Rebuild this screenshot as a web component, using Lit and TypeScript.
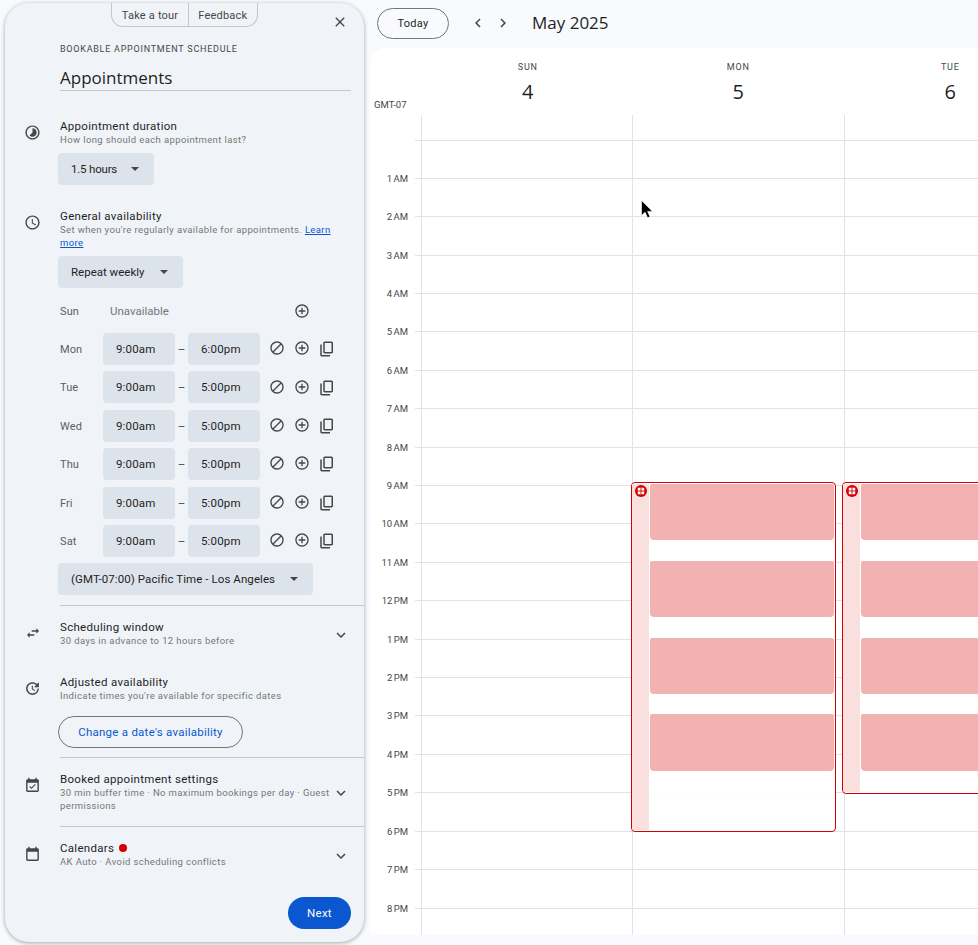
import { LitElement, html, css, svg } from "lit";
import { customElement } from "lit/decorators.js";

const P: Record<string, string> = {
  close: "M19 6.41L17.59 5 12 10.59 6.41 5 5 6.41 10.59 12 5 17.59 6.41 19 12 13.41 17.59 19 19 17.59 13.41 12z",
  lapse: "M16.24 7.76C15.07 6.59 13.54 6 12 6v6l-4.24 4.24c2.34 2.34 6.14 2.34 8.49 0 2.34-2.34 2.34-6.14-.01-8.48zM12 2C6.48 2 2 6.48 2 12s4.48 10 10 10 10-4.48 10-10S17.52 2 12 2zm0 18c-4.42 0-8-3.58-8-8s3.58-8 8-8 8 3.58 8 8-3.58 8-8 8z",
  clock: "M11.99 2C6.47 2 2 6.48 2 12s4.47 10 9.99 10C17.52 22 22 17.52 22 12S17.52 2 11.99 2zM12 20c-4.42 0-8-3.58-8-8s3.58-8 8-8 8 3.58 8 8-3.58 8-8 8zM12.5 7H11v6l5.25 3.15.75-1.23-4.5-2.67z",
  swap: "M6.99 11L3 15l3.99 4v-3H14v-2H6.99v-3zM21 9l-3.99-4v3H10v2h7.01v3L21 9z",
  update: "M21 10.12h-6.78l2.74-2.82c-2.73-2.7-7.15-2.8-9.88-.1-2.73 2.71-2.73 7.08 0 9.79s7.15 2.71 9.88 0C18.32 15.65 19 14.08 19 12.1h2c0 1.98-.88 4.55-2.64 6.29-3.51 3.48-9.21 3.48-12.72 0-3.5-3.47-3.53-9.11-.02-12.58s9.14-3.47 12.65 0L21 3v7.12zM12.5 8v4.25l3.5 2.08-.72 1.21L11 13V8h1.5z",
  booked: "M16.53 11.06L15.47 10l-4.88 4.88-2.12-2.12-1.06 1.06L10.59 17l5.94-5.94zM19 3h-1V1h-2v2H8V1H6v2H5c-1.11 0-1.99.9-1.99 2L3 19c0 1.1.89 2 2 2h14c1.1 0 2-.9 2-2V5c0-1.1-.9-2-2-2zm0 16H5V8h14v11z",
  cal: "M19 3h-1V1h-2v2H8V1H6v2H5c-1.1 0-2 .9-2 2v14c0 1.1.9 2 2 2h14c1.1 0 2-.9 2-2V5c0-1.1-.9-2-2-2zm0 16H5V8h14v11z",
  more: "M16.59 8.59L12 13.17 7.41 8.59 6 10l6 6 6-6z",
  left: "M15.41 7.41L14 6l-6 6 6 6 1.41-1.41L10.83 12z",
  right: "M10 6L8.59 7.41 13.17 12l-4.58 4.59L10 18l6-6z",
  block: "M12 2C6.48 2 2 6.48 2 12s4.48 10 10 10 10-4.48 10-10S17.52 2 12 2zM4 12c0-4.42 3.58-8 8-8 1.85 0 3.55.63 4.9 1.69L5.69 16.9C4.63 15.55 4 13.85 4 12zm8 8c-1.85 0-3.55-.63-4.9-1.69L18.31 7.1C19.37 8.45 20 10.15 20 12c0 4.42-3.58 8-8 8z",
  add: "M13 7h-2v4H7v2h4v4h2v-4h4v-2h-4V7zm-1-5C6.48 2 2 6.48 2 12s4.48 10 10 10 10-4.48 10-10S17.52 2 12 2zm0 18c-4.41 0-8-3.59-8-8s3.59-8 8-8 8 3.59 8 8-3.59 8-8 8z",
  copy: "M9 18q-.825 0-1.412-.587Q7 16.825 7 16V4q0-.825.588-1.413Q8.175 2 9 2h9q.825 0 1.413.587Q20 3.175 20 4v12q0 .825-.587 1.413Q18.825 18 18 18Zm0-2h9V4H9v12Zm-4 6q-.825 0-1.413-.587Q3 20.825 3 20V6h2v14h11v2Z",
};

const icon = (n: string, s: number) =>
  html`<svg class="ic" width=${s} height=${s} viewBox="0 0 24 24" fill="currentColor">${svg`<path d=${P[n]}></path>`}</svg>`;

const caret = html`<span class="caret"></span>`;

const DAYS: [string, string, string][] = [
  ["Mon", "9:00am", "6:00pm"],
  ["Tue", "9:00am", "5:00pm"],
  ["Wed", "9:00am", "5:00pm"],
  ["Thu", "9:00am", "5:00pm"],
  ["Fri", "9:00am", "5:00pm"],
  ["Sat", "9:00am", "5:00pm"],
];

const HOURS = ["1 AM","2 AM","3 AM","4 AM","5 AM","6 AM","7 AM","8 AM","9 AM","10 AM","11 AM","12 PM","1 PM","2 PM","3 PM","4 PM","5 PM","6 PM","7 PM","8 PM"];

@customElement("app-root")
export class AppRoot extends LitElement {
  static styles = css`
    :host { display: block; width: 978px; height: 945px; overflow: hidden; background: #f8fafd; font-family: Roboto, "Liberation Sans", sans-serif; color: #1f1f1f; }
    * { box-sizing: border-box; }
    .ic { display: block; flex: none; }
    .page { display: flex; height: 945px; }

    .panel { position: relative; flex: none; width: 359px; height: 939px; margin: 3px 0 0 5px; background: #f0f4f9; border-radius: 24px; box-shadow: 0 1px 4px rgba(60,64,67,.45); display: flex; flex-direction: column; }
    .tabs { align-self: center; display: flex; height: 24px; border: 1px solid #c4c7c5; border-top: 0; border-radius: 0 0 12px 12px; font-size: 11px; letter-spacing: .2px; color: #444746; line-height: 25px; }
    .tabs span { padding: 0 9.5px; }
    .tabs span + span { border-left: 1px solid #c4c7c5; }
    .x { position: absolute; top: 11px; left: 327px; color: #444746; }
    .head { margin: 16px 13px 0 55px; }
    .eyebrow { font-size: 9px; line-height: 12px; letter-spacing: .75px; color: #444746; font-weight: 400; }
    .name { margin-top: 11px; font-family: "Open Sans", sans-serif; font-size: 17px; line-height: 24px; height: 25px; border-bottom: 1px solid #c4c7c5; color: #1f1f1f; }

    .sec { display: flex; padding-right: 13px; }
    .lead { flex: none; width: 55px; display: flex; justify-content: center; padding-top: 5px; color: #444746; }
    .body { flex: 1; min-width: 0; }
    .t { font-size: 11.5px; line-height: 14px; letter-spacing: .3px; font-weight: 450; color: #1f1f1f; }
    .s { font-size: 9.5px; line-height: 13px; letter-spacing: .38px; color: #747775; }
    .s a { color: #0b57d0; text-decoration: underline; }
    .chev { flex: none; align-self: center; padding-top: 3px; margin: 0 1px 0 2px; color: #444746; }

    .sel { display: flex; justify-content: space-between; align-items: center; height: 32px; margin: 7px 0 0 -2px; padding: 0 15px 0 13px; background: #dde3ea; border-radius: 4px; font-size: 11.5px; color: #1f1f1f; }
    .sel.wk { width: 125px; }
    .sel.dur { width: 96px; letter-spacing: -.2px; }
    .sel.tz { width: 255px; margin-top: 2.8px; letter-spacing: .08px; }
    .caret { width: 0; height: 0; border-left: 4px solid transparent; border-right: 4px solid transparent; border-top: 4px solid #444746; }

    .rows { margin-top: 3.4px; }
    .row { display: flex; align-items: center; height: 38.4px; font-size: 11.5px; }
    .day { width: 43px; padding-top: 1px; font-size: 11px; letter-spacing: .1px; color: #5e5e5e; }
    .un { width: 161.5px; padding-left: 7px; color: #747775; }
    .tb { width: 72px; height: 32px; display: flex; align-items: center; padding-left: 13px; background: #dde3ea; border-radius: 4px; letter-spacing: .15px; }
    .dash { width: 13px; text-align: center; color: #444746; }
    .acts { display: flex; margin-left: 4.5px; padding-top: .6px; color: #444746; }
    .act { width: 25px; display: flex; justify-content: center; }

    hr { margin: 0 0 0 55px; border: 0; border-top: 1px solid #c4c7c5; height: 1px; flex: none; }
    .btn { display: flex; align-items: center; justify-content: center; border-radius: 16px; font-size: 11.5px; font-weight: 450; letter-spacing: .25px; }
    .out { width: 185px; height: 32px; margin: 14px 0 0 -2px; border: 1px solid #747775; color: #0b57d0; }
    .dot { display: inline-block; width: 8px; height: 8px; margin-left: 5px; border-radius: 50%; background: #d50000; }
    .next { align-self: flex-end; width: 63px; height: 32px; margin: 29px 13px 0 0; background: #0b57d0; color: #fff; }

    .main { flex: 1; min-width: 0; overflow: hidden; }
    .bar { display: flex; align-items: center; height: 48px; padding: 0 0 3px 13px; }
    .today { width: 72px; height: 31px; margin-top: 1px; border: 1px solid #747775; border-radius: 16px; font-size: 11px; color: #1f1f1f; }
    .nav { display: flex; margin-left: 16px; color: #444746; }
    .nav span { width: 25px; display: flex; justify-content: center; }
    .month { margin-left: 17px; font-family: "Open Sans", sans-serif; font-size: 17px; color: #1f1f1f; }

    .card { position: relative; width: 608px; height: 887px; margin-left: 6px; background: #fff; border-radius: 16px 0 0 0; overflow: hidden; }
    .dh { display: flex; height: 67px; }
    .gmt { flex: none; width: 51px; padding: 50px 0 0 4px; font-size: 9.5px; line-height: 14px; color: #444746; white-space: nowrap; }
    .dcol { flex: none; width: 211.5px; text-align: center; padding-top: 13px; }
    .dcol:nth-child(2) { padding-left: 2px; }
    .dcol:nth-child(4) { padding-left: 1px; }
    .dn { font-size: 9px; line-height: 12px; letter-spacing: .8px; color: #444746; }
    .dd { margin-top: 4px; font-family: "Open Sans", sans-serif; font-size: 20px; line-height: 30px; color: #1f1f1f; }

    .grid { position: relative; height: 820px; overflow: hidden; }
    .hrow { display: flex; height: 38.41px; }
    .hrow.first { height: 26px; }
    .hrow.second { height: 37.8px; }
    .lbl { flex: none; width: 45px; position: relative; font-size: 9.5px; line-height: 12px; color: #444746; word-spacing: -1px; }
    .lbl span { position: absolute; right: 7px; bottom: -6px; white-space: nowrap; }
    .ln { flex: 1; border-bottom: 1px solid #dde3ea; }
    .cols { position: absolute; top: 0; bottom: 0; left: 51px; display: flex; }
    .col { position: relative; flex: none; width: 211px; border-left: 1px solid #dde3ea; }
    .col:nth-child(n+2) { width: 212px; }

    .ev { position: absolute; top: 367px; background: rgba(255,255,255,.93); border: 1px solid #d50000; border-radius: 4px; display: flex; padding: 1px; }
    .ev.mon { left: -2px; width: 205px; height: 350px; }
    .ev.tue { left: -3px; width: 205px; height: 312px; }
    .strip { flex: none; width: 17px; margin-left: -1px; background: #fadfdf; border-radius: 0 0 2px 2px; }
    .slots { flex: 1; margin-left: 1px; display: flex; flex-direction: column; gap: 20.5px; }
    .slot { flex: none; height: 56.3px; background: #f3b2b2; border-radius: 2px 2px 4px 4px; }
    .badge { position: absolute; top: 2px; left: 3px; }
    .cursor { position: absolute; left: 271px; top: 152px; }
  `;

  private event(cls: string) {
    return html`<div class="ev ${cls}">
      <div class="strip"></div>
      <div class="slots"><div class="slot"></div><div class="slot"></div><div class="slot"></div><div class="slot"></div></div>
      <svg class="badge" width="12" height="12" viewBox="0 0 12 12">
        <circle cx="6" cy="6" r="6" fill="#d50000"></circle>
        <rect x="2.8" y="2.8" width="6.4" height="6.4" rx=".6" fill="#fff"></rect>
        <path d="M6 2.8v6.4M2.8 6h6.4" stroke="#d50000" stroke-width=".9"></path>
      </svg>
    </div>`;
  }

  render() {
    return html`<div class="page">
      <aside class="panel">
        <div class="tabs"><span>Take a tour</span><span>Feedback</span></div>
        <div class="x">${icon("close", 16)}</div>
        <div class="head">
          <div class="eyebrow">BOOKABLE APPOINTMENT SCHEDULE</div>
          <div class="name">Appointments</div>
        </div>

        <div class="sec" style="margin-top:28px">
          <div class="lead">${icon("lapse", 17)}</div>
          <div class="body">
            <div class="t">Appointment duration</div>
            <div class="s">How long should each appointment last?</div>
            <div class="sel dur"><span>1.5 hours</span>${caret}</div>
          </div>
        </div>

        <div class="sec" style="margin-top:24px">
          <div class="lead">${icon("clock", 17)}</div>
          <div class="body">
            <div class="t">General availability</div>
            <div class="s">Set when you're regularly available for appointments. <a>Learn more</a></div>
            <div class="sel wk"><span>Repeat weekly</span>${caret}</div>
            <div class="rows">
              <div class="row">
                <div class="day">Sun</div><div class="un">Unavailable</div>
                <div class="acts" style="margin-left:0"><div class="act"></div><div class="act">${icon("add", 16)}</div></div>
              </div>
              ${DAYS.map(([d, a, b]) => html`<div class="row">
                <div class="day">${d}</div>
                <div class="tb">${a}</div><div class="dash">–</div><div class="tb">${b}</div>
                <div class="acts">
                  <div class="act">${icon("block", 16)}</div>
                  <div class="act">${icon("add", 16)}</div>
                  <div class="act">${icon("copy", 18)}</div>
                </div>
              </div>`)}
            </div>
            <div class="sel tz"><span>(GMT-07:00) Pacific Time - Los Angeles</span>${caret}</div>
          </div>
        </div>

        <hr style="margin-top:10px" />

        <div class="sec" style="margin-top:14px">
          <div class="lead">${icon("swap", 16)}</div>
          <div class="body">
            <div class="t">Scheduling window</div>
            <div class="s">30 days in advance to 12 hours before</div>
          </div>
          <div class="chev">${icon("more", 18)}</div>
        </div>

        <div class="sec" style="margin-top:28px">
          <div class="lead">${icon("update", 17)}</div>
          <div class="body">
            <div class="t">Adjusted availability</div>
            <div class="s">Indicate times you're available for specific dates</div>
            <div class="btn out">Change a date's availability</div>
          </div>
        </div>

        <hr style="margin-top:9px" />

        <div class="sec" style="margin-top:14px">
          <div class="lead">${icon("booked", 17)}</div>
          <div class="body">
            <div class="t">Booked appointment settings</div>
            <div class="s">30 min buffer time · No maximum bookings per day · Guest permissions</div>
          </div>
          <div class="chev">${icon("more", 18)}</div>
        </div>

        <hr style="margin-top:14px" />

        <div class="sec" style="margin-top:14px">
          <div class="lead">${icon("cal", 17)}</div>
          <div class="body">
            <div class="t">Calendars<span class="dot"></span></div>
            <div class="s">AK Auto · Avoid scheduling conflicts</div>
          </div>
          <div class="chev">${icon("more", 18)}</div>
        </div>

        <div class="btn next">Next</div>
      </aside>

      <main class="main">
        <div class="bar">
          <div class="btn today">Today</div>
          <div class="nav"><span>${icon("left", 18)}</span><span>${icon("right", 18)}</span></div>
          <div class="month">May 2025</div>
        </div>
        <div class="card">
          <div class="dh">
            <div class="gmt">GMT-07</div>
            <div class="dcol"><div class="dn">SUN</div><div class="dd">4</div></div>
            <div class="dcol"><div class="dn">MON</div><div class="dd">5</div></div>
            <div class="dcol"><div class="dn">TUE</div><div class="dd">6</div></div>
          </div>
          <div class="grid">
            <div class="hrow first"><div class="lbl"></div><div class="ln"></div></div>
            ${HOURS.map((h, i) => html`<div class="hrow ${i === 0 ? "second" : ""}"><div class="lbl"><span>${h}</span></div><div class="ln"></div></div>`)}
            <div class="cols">
              <div class="col"></div>
              <div class="col">${this.event("mon")}</div>
              <div class="col">${this.event("tue")}</div>
            </div>
          </div>
          <svg class="cursor" width="12" height="19" viewBox="0 0 12 19">
            <path d="M.5.5v15l3.6-3.3 2.5 5.6 2.4-1-2.4-5.4h4.9z" fill="#000" stroke="#fff" stroke-width=".6"></path>
          </svg>
        </div>
      </main>
    </div>`;
  }
}
